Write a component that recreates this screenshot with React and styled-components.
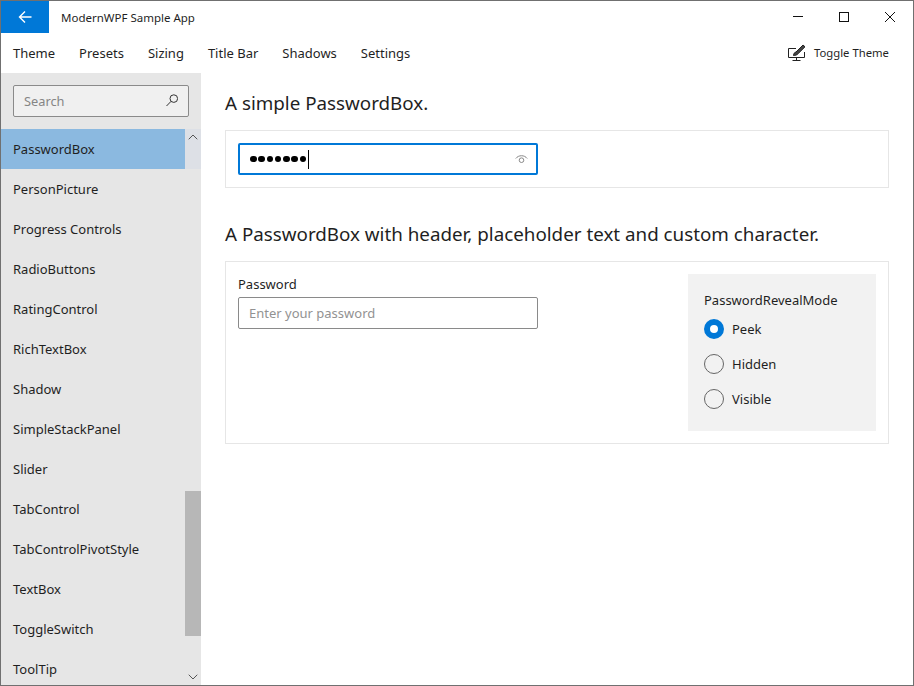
import React from "react";
import styled, { createGlobalStyle } from "styled-components";
import { ChevronUp, ChevronDown } from "lucide-react";

const GlobalStyle = createGlobalStyle`
  * { box-sizing: border-box; }
  html, body { margin: 0; padding: 0; background: #fff; }
  body { font-family: "Noto Sans", "Open Sans", sans-serif; color: #1f1f1f; }
`;

const Window = styled.div`
  width: 914px;
  height: 686px;
  border: 1px solid #707070;
  display: flex;
  flex-direction: column;
  overflow: hidden;
  background: #fff;
`;

const TitleBar = styled.div`
  height: 32px;
  flex: none;
  display: flex;
  align-items: center;
`;

const BackButton = styled.div`
  width: 48px;
  height: 32px;
  background: #0078d7;
  color: #fff;
  display: flex;
  align-items: center;
  justify-content: center;
`;

const AppTitle = styled.div`
  margin-left: 12px;
  font-size: 11.5px;
  flex: 1;
`;

const WindowButton = styled.div`
  width: 46px;
  height: 32px;
  display: flex;
  align-items: center;
  justify-content: center;
`;

const MenuBar = styled.div`
  height: 40px;
  flex: none;
  display: flex;
  align-items: center;
  padding: 0 12px 1px;
  font-size: 13px;
`;

const MenuItem = styled.div`
  margin-right: 24px;
`;

const ToggleTheme = styled.div`
  margin-left: auto;
  margin-right: 12px;
  display: flex;
  align-items: center;
  gap: 7px;
  font-size: 11.3px;
`;

const Body = styled.div`
  flex: 1;
  min-height: 0;
  display: flex;
`;

const Sidebar = styled.div`
  width: 200px;
  flex: none;
  background: #e6e6e6;
  display: flex;
  flex-direction: column;
  min-height: 0;
`;

const SearchBox = styled.div`
  height: 32px;
  margin: 12px;
  border: 1px solid #8a8a8a;
  border-radius: 2px;
  background: #f0f0f0;
  display: flex;
  align-items: center;
  justify-content: space-between;
  padding: 0 10px 1px;
  font-size: 12.8px;
  color: #858585;
  flex: none;
`;

const ListArea = styled.div`
  flex: 1;
  min-height: 0;
  display: flex;
  overflow: hidden;
`;

const List = styled.div`
  width: 184px;
  flex: none;
`;

const Item = styled.div`
  height: 40px;
  display: flex;
  align-items: center;
  padding: 0 0 1px 12px;
  font-size: 13px;
  background: ${(p) => (p.$selected ? "#8bb9e0" : "transparent")};
`;

const ScrollBar = styled.div`
  width: 16px;
  flex: none;
  display: flex;
  flex-direction: column;
  color: #555;
`;

const ScrollTop = styled.div`
  height: 40px;
  flex: none;
  background: #dde0e6;
  display: flex;
  justify-content: center;
`;

const ScrollGap = styled.div`
  height: 322px;
  flex: none;
`;

const ScrollThumb = styled.div`
  height: 145px;
  flex: none;
  background: #b7b7b7;
`;

const ScrollBottom = styled.div`
  flex: 1;
  display: flex;
  align-items: flex-end;
  justify-content: center;
`;

const Content = styled.div`
  flex: 1;
  min-width: 0;
  padding: 0 24px;
`;

const Heading = styled.div`
  font-size: 18.8px;
  line-height: 24px;
  margin-top: ${(p) => p.$top}px;
  margin-bottom: ${(p) => p.$bottom}px;
`;

const Card = styled.div`
  border: 1px solid #e6e6e6;
  padding: 12px;
  display: flex;
  justify-content: space-between;
  height: ${(p) => p.$height}px;
`;

const Field = styled.div`
  width: 300px;
  height: 32px;
  border: ${(p) => (p.$focused ? "2px solid #0078d7" : "1px solid #8a8a8a")};
  border-radius: 2px;
  display: flex;
  align-items: center;
  justify-content: space-between;
  padding: ${(p) => (p.$focused ? "0 8px 0 10px" : "0 10px 1px")};
  font-size: 13px;
  color: #929292;
`;

const Dots = styled.div`
  display: flex;
  align-items: center;
  gap: 1.7px;
`;

const Dot = styled.span`
  width: 6.6px;
  height: 6.6px;
  border-radius: 50%;
  background: #000;
`;

const Caret = styled.span`
  width: 1px;
  height: 19px;
  background: #000;
`;

const FieldLabel = styled.div`
  font-size: 13px;
  line-height: 19px;
  padding-top: 1px;
  margin-bottom: 3px;
`;

const OptionsPanel = styled.div`
  width: 188px;
  height: 157px;
  background: #f2f2f2;
  padding: 17px 16px 16px;
`;

const OptionsTitle = styled.div`
  font-size: 13px;
  line-height: 19px;
  margin-bottom: 1px;
`;

const Radio = styled.div`
  height: 35px;
  display: flex;
  align-items: center;
  gap: 8px;
  font-size: 13px;
`;

const RadioCircle = styled.span`
  width: 20px;
  height: 20px;
  border-radius: 50%;
  flex: none;
  ${(p) =>
    p.$checked
      ? "border: 6px solid #0078d7; background: #fff;"
      : "border: 1px solid #666; background: transparent;"}
`;

const menu = ["Theme", "Presets", "Sizing", "Title Bar", "Shadows", "Settings"];
const items = [
  "PasswordBox",
  "PersonPicture",
  "Progress Controls",
  "RadioButtons",
  "RatingControl",
  "RichTextBox",
  "Shadow",
  "SimpleStackPanel",
  "Slider",
  "TabControl",
  "TabControlPivotStyle",
  "TextBox",
  "ToggleSwitch",
  "ToolTip",
];

function BackArrow() {
  return (
    <svg width="14" height="14" viewBox="0 0 14 14" fill="none" stroke="#fff" strokeWidth="1.4">
      <path d="M1.5 7H13.5M7 1.5L1.5 7L7 12.5" />
    </svg>
  );
}

function MinimizeIcon() {
  return (
    <svg width="12" height="12" viewBox="0 0 12 12" fill="none" stroke="#111">
      <path d="M1 5.5H11" />
    </svg>
  );
}

function MaximizeIcon() {
  return (
    <svg width="12" height="12" viewBox="0 0 12 12" fill="none" stroke="#111">
      <rect x="1.5" y="1.5" width="9" height="9" />
    </svg>
  );
}

function CloseIcon() {
  return (
    <svg width="12" height="12" viewBox="0 0 12 12" fill="none" stroke="#111">
      <path d="M1 1L11 11M11 1L1 11" />
    </svg>
  );
}

function SearchGlyph() {
  return (
    <svg width="12" height="13" viewBox="0 0 12 13" fill="none" stroke="#333" strokeWidth="1">
      <circle cx="7.8" cy="4.6" r="3.8" />
      <path d="M5 7.4L0.5 12" />
    </svg>
  );
}

function ThemeIcon() {
  return (
    <svg width="19" height="17" viewBox="0 0 19 17" fill="none" stroke="#222" strokeWidth="1">
      <path d="M8 4.5H0.5V13.5H16.5V8" />
      <path d="M4.5 16.5H12.5M8.5 13.5V16.5" />
      <path d="M5.5 11.5C5.5 9.5 6.5 8.5 8 8L15 1L17 2.8L10.2 9.6C9.2 11 7.2 11.5 5.5 11.5Z" fill="#444" />
    </svg>
  );
}

function EyeIcon() {
  return (
    <svg width="13" height="10" viewBox="0 0 13 10" fill="none" stroke="#888" strokeWidth="1">
      <path d="M0.8 4.5C3.5 0.8 9.5 0.8 12.2 4.5" />
      <circle cx="6.5" cy="6.2" r="2.3" />
    </svg>
  );
}

export default function App() {
  return (
    <>
      <GlobalStyle />
      <Window>
        <TitleBar>
          <BackButton>
            <BackArrow />
          </BackButton>
          <AppTitle>ModernWPF Sample App</AppTitle>
          <WindowButton><MinimizeIcon /></WindowButton>
          <WindowButton><MaximizeIcon /></WindowButton>
          <WindowButton><CloseIcon /></WindowButton>
        </TitleBar>
        <MenuBar>
          {menu.map((m) => (
            <MenuItem key={m}>{m}</MenuItem>
          ))}
          <ToggleTheme>
            <ThemeIcon />
            Toggle Theme
          </ToggleTheme>
        </MenuBar>
        <Body>
          <Sidebar>
            <SearchBox>
              Search
              <SearchGlyph />
            </SearchBox>
            <ListArea>
              <List>
                {items.map((it, i) => (
                  <Item key={it} $selected={i === 0}>{it}</Item>
                ))}
              </List>
              <ScrollBar>
                <ScrollTop><ChevronUp size={16} strokeWidth={1.5} /></ScrollTop>
                <ScrollGap />
                <ScrollThumb />
                <ScrollBottom><ChevronDown size={16} strokeWidth={1.5} /></ScrollBottom>
              </ScrollBar>
            </ListArea>
          </Sidebar>
          <Content>
            <Heading $top={18} $bottom={15}>A simple PasswordBox.</Heading>
            <Card $height={58}>
              <Field $focused>
                <Dots>
                  {[0, 1, 2, 3, 4, 5, 6].map((d) => <Dot key={d} />)}
                  <Caret />
                </Dots>
                <EyeIcon />
              </Field>
            </Card>
            <Heading $top={34} $bottom={15}>A PasswordBox with header, placeholder text and custom character.</Heading>
            <Card $height={183}>
              <div>
                <FieldLabel>Password</FieldLabel>
                <Field>Enter your password</Field>
              </div>
              <OptionsPanel>
                <OptionsTitle>PasswordRevealMode</OptionsTitle>
                <Radio><RadioCircle $checked />Peek</Radio>
                <Radio><RadioCircle />Hidden</Radio>
                <Radio><RadioCircle />Visible</Radio>
              </OptionsPanel>
            </Card>
          </Content>
        </Body>
      </Window>
    </>
  );
}
